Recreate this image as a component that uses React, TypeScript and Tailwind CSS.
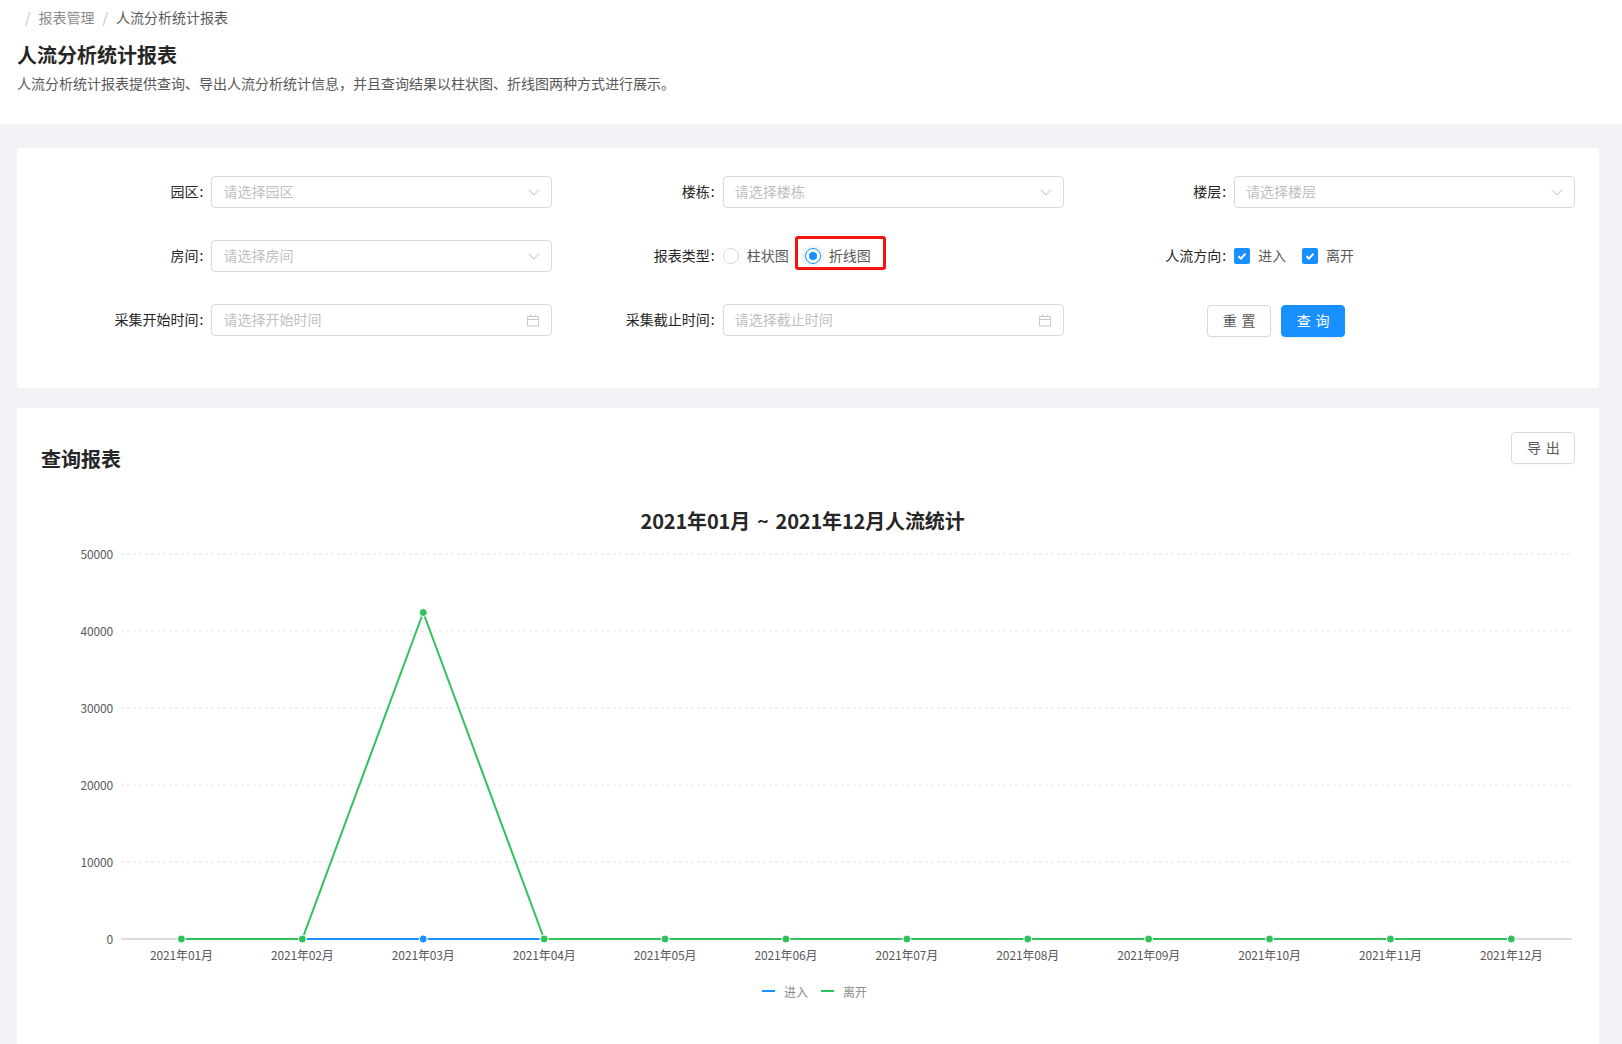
import * as React from 'react'

const FONT = "font-['Noto_Sans_CJK_SC','Liberation_Sans',sans-serif]"

const MONTHS = Array.from({ length: 12 }, (_, i) => `2021年${String(i + 1).padStart(2, '0')}月`)
const LEAVE = [0, 0, 42400, 0, 0, 0, 0, 0, 0, 0, 0, 0]
const TICKS = [50000, 40000, 30000, 20000, 10000, 0]

// chart is drawn in page coordinates, the viewBox maps them onto the svg box
const BAND = 120.9
const X0 = 121
const X1 = 1572
const Y0 = 939
const PER_UNIT = 385 / 50000
const px = (i: number) => X0 + BAND * (i + 0.5)
const py = (v: number) => Y0 - v * PER_UNIT

function Chevron() {
  return (
    <svg width="12" height="12" viewBox="0 0 12 12" fill="none" stroke="#bfbfbf" strokeWidth="1">
      <path d="M1 3.5 6 9l5-5.5" />
    </svg>
  )
}

function CalendarIcon() {
  return (
    <svg width="14" height="14" viewBox="0 0 14 14" fill="none" stroke="#c8c8c8" strokeWidth="1">
      <path d="M1.5 3.5h11v9.5h-11zM1.5 6.5h11M4.5 1.5v2M9.5 1.5v2" />
    </svg>
  )
}

function Field({ label, children }: { label: string; children: React.ReactNode }) {
  return (
    <div className="flex h-8 items-center">
      <label className="flex w-1/3 justify-end pb-[2px] pr-2 text-[#262626]">
        {label}
        <span className="ml-px">:</span>
      </label>
      <div className="w-2/3">{children}</div>
    </div>
  )
}

function Picker({ placeholder, icon }: { placeholder: string; icon: React.ReactNode }) {
  return (
    <div className="flex h-8 items-center justify-between rounded border border-[#d9d9d9] bg-white pl-[11px] pr-[11px]">
      <span className="pb-[2px] text-[#bfbfbf]">{placeholder}</span>
      {icon}
    </div>
  )
}

function Radio({ checked, label }: { checked?: boolean; label: string }) {
  return (
    <span className="relative mr-2 flex items-center text-[#595959]">
      {checked ? (
        <span className="flex h-4 w-4 items-center justify-center rounded-full border border-[#1890ff] shadow-[0_0_0_3px_rgba(24,144,255,0.08)]">
          <span className="h-2 w-2 rounded-full bg-[#1890ff]" />
        </span>
      ) : (
        <span className="h-4 w-4 rounded-full border border-[#d9d9d9]" />
      )}
      <span className="px-2 pb-[2px]">{label}</span>
      {/* red annotation drawn over the screenshot */}
      {checked && (
        <span className="absolute -left-[10px] -top-[9px] h-[34px] w-[91px] rounded-[3px] border-[3px] border-[#f5140f]" />
      )}
    </span>
  )
}

function Check({ label }: { label: string }) {
  return (
    <span className="mr-2 flex items-center text-[#595959]">
      <span className="flex h-4 w-4 items-center justify-center rounded-[2px] bg-[#1890ff]">
        <svg width="12" height="12" viewBox="0 0 12 12" fill="none" stroke="#fff" strokeWidth="2">
          <path d="M2.5 6.2 5 8.6l4.5-5" />
        </svg>
      </span>
      <span className="px-2 pb-[2px]">{label}</span>
    </span>
  )
}

function Btn({ label, primary }: { label: string; primary?: boolean }) {
  return (
    <button
      className={
        primary
          ? 'h-8 w-16 rounded border border-[#1890ff] bg-[#1890ff] pb-[2px] pl-px text-white shadow-[0_2px_0_rgba(0,0,0,0.045)]'
          : 'h-8 w-16 rounded border border-[#d9d9d9] bg-white pb-[2px] pl-px text-[#595959] shadow-[0_2px_0_rgba(0,0,0,0.015)]'
      }
    >
      <span className="-mr-[0.34em] tracking-[0.34em]">{label}</span>
    </button>
  )
}

function Chart() {
  const enter = MONTHS.map((_, i) => `${px(i)},${py(0)}`).join(' ')
  const leave = LEAVE.map((v, i) => `${px(i)},${py(v)}`).join(' ')
  return (
    <svg className="block h-[556px] w-full" viewBox="41 488 1534 556" fontSize="12">
      <text
        x="802.5"
        y="529"
        textAnchor="middle"
        fontSize="20"
        fontWeight="700"
        fill="#262626"
        letterSpacing="-0.15"
        wordSpacing="2.5"
      >
        2021年01月 ~ 2021年12月人流统计
      </text>
      {TICKS.map((t) => (
        <g key={t}>
          <text x="113" y={py(t) + 5} textAnchor="end" fill="#595959" letterSpacing="-0.15">
            {t}
          </text>
          {t > 0 && (
            <line x1={X0} x2={X1} y1={py(t)} y2={py(t)} stroke="#f0f0f0" strokeWidth="1.5" strokeDasharray="3 3" />
          )}
        </g>
      ))}
      <line x1={X0} x2={X1} y1={Y0} y2={Y0} stroke="#dcdcdc" strokeWidth="2" />
      {MONTHS.map((m, i) => (
        <text key={m} x={px(i)} y="960" textAnchor="middle" fill="#595959" letterSpacing="-0.15">
          {m}
        </text>
      ))}
      <polyline points={enter} fill="none" stroke="#1890ff" strokeWidth="2" />
      {MONTHS.map((m, i) => (
        <circle key={m} cx={px(i)} cy={py(0)} r="4" fill="#1890ff" stroke="#fff" />
      ))}
      <polyline points={leave} fill="none" stroke="#2fc25b" strokeWidth="2" />
      {LEAVE.map((v, i) =>
        i === 2 ? (
          <circle key={i} cx={px(i)} cy={py(0)} r="4" fill="#1890ff" stroke="#fff" />
        ) : (
          <circle key={i} cx={px(i)} cy={py(v)} r="4" fill="#2fc25b" stroke="#fff" />
        ),
      )}
      <circle cx={px(2)} cy={py(LEAVE[2])} r="4" fill="#2fc25b" stroke="#fff" />
      <line x1="762" x2="775" y1="991" y2="991" stroke="#1890ff" strokeWidth="2" />
      <text x="784" y="997" fill="#8c8c8c">
        进入
      </text>
      <line x1="821" x2="834" y1="991" y2="991" stroke="#2fc25b" strokeWidth="2" />
      <text x="843" y="997" fill="#8c8c8c">
        离开
      </text>
    </svg>
  )
}

export default function App() {
  return (
    <div className={`h-[1044px] overflow-hidden bg-[#f0f2f5] text-sm ${FONT}`}>
      <header className="h-[124px] bg-white pl-[17px] pt-[6px]">
        <nav className="flex h-[22px] items-center text-[#8c8c8c]">
          <span className="mx-2 text-[#bfbfbf]">/</span>
          <span>报表管理</span>
          <span className="mx-2 text-[#bfbfbf]">/</span>
          <span className="text-[#595959]">人流分析统计报表</span>
        </nav>
        <h1 className="mt-[11px] h-8 text-xl font-bold leading-8 text-[#262626]">人流分析统计报表</h1>
        <p className="mt-px h-[22px] leading-[22px] text-[#595959]">
          人流分析统计报表提供查询、导出人流分析统计信息，并且查询结果以柱状图、折线图两种方式进行展示。
        </p>
      </header>

      <main className="pl-[17px] pr-[23px] pt-6">
        <section className="h-[240px] bg-white px-6 pt-7">
          <div className="grid grid-cols-3 gap-y-8">
            <Field label="园区">
              <Picker placeholder="请选择园区" icon={<Chevron />} />
            </Field>
            <Field label="楼栋">
              <Picker placeholder="请选择楼栋" icon={<Chevron />} />
            </Field>
            <Field label="楼层">
              <Picker placeholder="请选择楼层" icon={<Chevron />} />
            </Field>
            <Field label="房间">
              <Picker placeholder="请选择房间" icon={<Chevron />} />
            </Field>
            <Field label="报表类型">
              <div className="flex">
                <Radio label="柱状图" />
                <Radio label="折线图" checked />
              </div>
            </Field>
            <Field label="人流方向">
              <div className="flex">
                <Check label="进入" />
                <Check label="离开" />
              </div>
            </Field>
            <Field label="采集开始时间">
              <Picker placeholder="请选择开始时间" icon={<CalendarIcon />} />
            </Field>
            <Field label="采集截止时间">
              <Picker placeholder="请选择截止时间" icon={<CalendarIcon />} />
            </Field>
            <div className="ml-[143px] flex gap-2.5 pt-px">
              <Btn label="重置" />
              <Btn label="查询" primary />
            </div>
          </div>
        </section>

        <section className="mt-5 h-[636px] bg-white pt-6">
          <div className="flex h-14 items-start justify-between px-6">
            <h2 className="mt-[11px] text-xl font-bold leading-8 text-[#262626]">查询报表</h2>
            <Btn label="导出" />
          </div>
          <div className="px-6">
            <Chart />
          </div>
        </section>
      </main>
    </div>
  )
}
